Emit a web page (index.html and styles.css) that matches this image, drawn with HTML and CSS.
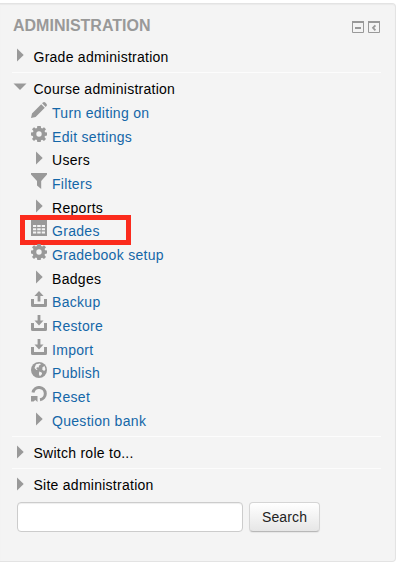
FILE: index.html
```html
<!DOCTYPE html>
<html lang="en">
<head>
<meta charset="utf-8">
<title>Administration</title>
<link rel="stylesheet" href="styles.css">
</head>
<body>
<svg class="defs" width="0" height="0" aria-hidden="true">
  <symbol id="caret" viewBox="0 0 16 16"><path d="M5 1.500l6.700 6.500L5 14.500z"/></symbol>
  <symbol id="gear" viewBox="0 0 16 16"><path fill-rule="evenodd" d="M6.300 0h3.400l.4 2.100 1.200.5L13 1.200 15 3.200l-1.400 1.800.5 1.200 1.900.3v3l-2 .4-.5 1.200L15 13l-2 2-1.800-1.300-1.200.5L9.700 16H6.300l-.4-1.900-1.200-.5L3 15l-2-2 1.300-1.800L1.800 10 0 9.600v-3l2-.4.5-1.200L1 3.200l2-2 1.800 1.400 1.200-.5zM8 5.300a2.700 2.700 0 1 0 0 5.400 2.700 2.700 0 0 0 0-5.400z"/></symbol>
  <symbol id="down" viewBox="0 0 16 16"><path d="M0 8h3v5h10V8h3v6.500q0 1.500-1.500 1.500h-13Q0 16 0 14.500zM6.600 0h2.800v5.500h3.100L8 10.500 3.500 5.500h3.100z"/></symbol>
</svg>
<section class="block">
  <header class="head">
    <h2>ADMINISTRATION</h2>
    <div class="actions">
      <svg width="12" height="12" viewBox="0 0 12 12"><path class="frame" d="M.5.5h11v11H.5z"/><path d="M0 0h12v2H0zM3 6h6v2H3z"/></svg>
      <svg width="12" height="12" viewBox="0 0 12 12"><path class="frame" d="M.5.5h11v11H.5z"/><path d="M0 0h12v2H0z"/><path class="chev" d="M7.400 4.300L5 6.800l2.400 2.500"/></svg>
    </div>
  </header>
  <div class="top"><svg viewBox="0 0 16 16"><use href="#caret"/></svg><span>Grade administration</span></div>
  <div class="top course"><svg viewBox="0 0 16 16"><path d="M1.500 4.500h13L8 11z"/></svg><span>Course administration</span></div>
  <ul class="tree">
    <li><svg viewBox="0 0 16 16"><path d="M0 16l1-4.600L10.200 2.200l3.600 3.600L4.600 15zM11.100 1.300l.8-.8q1.200-1 2.400.1l1.100 1.100q1.100 1.200.1 2.400l-.8.800z"/></svg><a>Turn editing on</a></li>
    <li><svg viewBox="0 0 16 16"><use href="#gear"/></svg><a>Edit settings</a></li>
    <li class="branch"><svg viewBox="0 0 16 16"><use href="#caret"/></svg><span>Users</span></li>
    <li><svg viewBox="0 0 16 16"><path d="M0 0h16v1.500L10.200 8v8L6 12.500V8L0 1.500z"/></svg><a>Filters</a></li>
    <li class="branch"><svg viewBox="0 0 16 16"><use href="#caret"/></svg><span>Reports</span></li>
    <li class="marked"><svg viewBox="0 0 16 16"><path fill-rule="evenodd" d="M0 0h16v16H0zM2 5h3.200v2H2zM6.200 5h3.500v2H6.200zM10.700 5H14v2h-3.300zM2 8.300h3.200v2H2zM6.200 8.300h3.500v2H6.200zM10.700 8.300H14v2h-3.300zM2 11.600h3.200v2H2zM6.200 11.600h3.500v2H6.200zM10.700 11.600H14v2h-3.300z"/></svg><a>Grades</a></li>
    <li><svg viewBox="0 0 16 16"><use href="#gear"/></svg><a>Gradebook setup</a></li>
    <li class="branch"><svg viewBox="0 0 16 16"><use href="#caret"/></svg><span>Badges</span></li>
    <li><svg viewBox="0 0 16 16"><path d="M0 8h3v5h10V8h3v6.500q0 1.500-1.500 1.500h-13Q0 16 0 14.500zM8 0l4.600 5H9.400v5.500H6.600V5H3.400z"/></svg><a>Backup</a></li>
    <li><svg viewBox="0 0 16 16"><use href="#down"/></svg><a>Restore</a></li>
    <li><svg viewBox="0 0 16 16"><use href="#down"/></svg><a>Import</a></li>
    <li><svg viewBox="0 0 16 16"><circle cx="8" cy="8" r="8"/><path class="land" d="M5 2.200L9 1.500l.8 1.300-1.800.7-.3 2-1.800-.3-.5 1.600 1.300 1.100-1.200.2L3.500 6zM11.500 5.300l2-1.300 1 3.300-1.300 1.700-1.900-1.200zM8.300 9.600l2.400.9.400 1.500-2.200 2.300-1-2z"/></svg><a>Publish</a></li>
    <li><svg viewBox="0 0 16 16"><path class="ring" d="M2 6.500A6.200 6.200 0 1 1 9 13.800"/><path d="M0 10h6.500v6L4.300 14 2.500 15.500H0z"/></svg><a>Reset</a></li>
    <li class="branch"><svg viewBox="0 0 16 16"><use href="#caret"/></svg><a>Question bank</a></li>
  </ul>
  <div class="top ruled"><svg viewBox="0 0 16 16"><use href="#caret"/></svg><span>Switch role to...</span></div>
  <div class="top ruled"><svg viewBox="0 0 16 16"><use href="#caret"/></svg><span>Site administration</span></div>
  <form class="search"><input type="text" aria-label="Search"><button type="button">Search</button></form>
</section>
</body>
</html>
```
FILE: styles.css
```css
*, *::after { box-sizing: border-box; }
body { margin: 0; height: 562px; overflow: hidden; background: #fff; font: 14px/20px "Liberation Sans", Arial, sans-serif; color: #000; }
.defs { display: block; }
.block { width: 396px; height: 559px; margin-top: 3px; background: #f4f4f4; border: solid #e3e3e3; border-width: 1px 1px 1px 0; border-radius: 0 4px 4px 0; box-shadow: inset 0 1px 1px rgba(0, 0, 0, .04); padding-left: 12px; }
.head { display: flex; justify-content: space-between; height: 36px; padding: 12px 15px 0 1px; }
h2 { margin: 0; font-size: 16px; line-height: 20px; color: #999; letter-spacing: 0; }
.actions { display: flex; gap: 4px; padding-top: 5px; }
svg { fill: #999; flex: none; }
.frame { fill: none; stroke: #999; }
.chev { fill: none; stroke: #999; stroke-width: 1.8; }
.land { fill: #f4f4f4; }
.ring { fill: none; stroke: #999; stroke-width: 3; }
.top { display: flex; width: 369px; height: 33px; padding-top: 7px; border-bottom: 1px solid #fcfcfc; letter-spacing: .26px; }
.top svg { width: 16px; height: 16px; margin: 0 6px 0 0; }
.top span { margin-left: -.5px; }
.course { height: 28px; padding-top: 6px; border: 0; }
.tree { list-style: none; margin: 0; padding: 0 0 0 19px; height: 336px; width: 369px; border-bottom: 1px solid #fcfcfc; letter-spacing: .3px; }
.tree li { position: relative; display: flex; height: 23.66px; padding-top: 2px; }
.tree svg { width: 16px; height: 16px; margin-right: 5px; margin-top: -1px; }
.tree .branch svg { margin-top: 0; }
.tree a { color: #1467a8; }
.marked::after { content: ""; position: absolute; left: -11px; top: -4px; width: 111px; height: 30px; border: 5px solid #fb2b1d; }
.ruled { height: 32px; padding-top: 6px; }
.ruled svg { margin-top: 1px; }
.ruled + .ruled { border: 0; }
.search { display: flex; gap: 6px; margin: 1px 0 0 5px; }
input { width: 226px; height: 30px; border: 1px solid #ccc; border-radius: 4px; background: #fff; box-shadow: inset 0 1px 1px rgba(0, 0, 0, .07); }
button { width: 71px; height: 30px; padding: 0; border: 1px solid #d5d5d5; border-bottom-color: #b8b8b8; border-radius: 4px; background: linear-gradient(#fff, #e6e6e6); font: inherit; letter-spacing: .12px; color: #222; box-shadow: 0 1px 1px rgba(0, 0, 0, .06); }
```
